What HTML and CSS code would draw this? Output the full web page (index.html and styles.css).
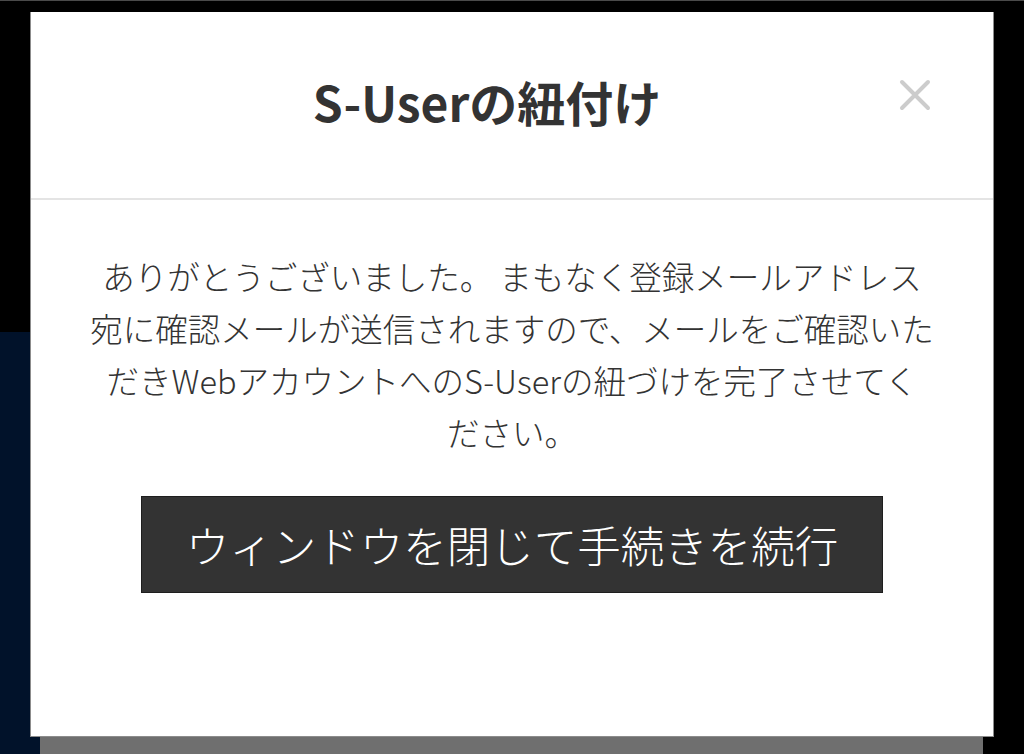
FILE: index.html
```html
<!DOCTYPE html>
<html lang="ja">
<head>
    <meta charset="UTF-8">
    <meta name="viewport" content="width=device-width, initial-scale=1.0">
    <title>S-Userの紐付け</title>
    <link rel="stylesheet" href="styles.css">
</head>
<body>

    <!-- Page behind the dialog -->
    <div class="page">
        <div class="page-top"></div>
        <div class="page-main">
            <div class="page-bar"></div>
        </div>
    </div>

    <!-- Dialog -->
    <div class="modal">
        <div class="modal-header">
            <h2 class="modal-title">S-Userの紐付け</h2>
            <button class="modal-close" aria-label="閉じる">
                <svg width="32" height="32" viewBox="0 0 32 32">
                    <path d="M3 3 L29 29 M29 3 L3 29" stroke="#cccccc" stroke-width="4" stroke-linecap="round" fill="none"/>
                </svg>
            </button>
        </div>

        <div class="modal-body">
            <p class="modal-text">
                ありがとうございました。 まもなく登録メールアドレス<br>
                宛に確認メールが送信されますので、メールをご確認いた<br>
                だきWebアカウントへのS-Userの紐づけを完了させてく<br>
                ださい。
            </p>
            <button class="modal-button">ウィンドウを閉じて手続きを続行</button>
        </div>
    </div>

</body>
</html>
```

FILE: styles.css
```css
body {
    margin: 0;
    padding: 0;
    background-color: #000;
    font-family: "Noto Sans CJK JP", "Noto Sans", sans-serif;
    color: #333;
    height: 754px;
    overflow: hidden;
}

/* Page behind the dialog */
.page {
    border-top: 1px solid #4a4a4a;
}

.page-top {
    height: 331px;
}

.page-main {
    width: 983px;
    height: 422px;
    background-color: #01122a;
    display: flex;
    align-items: flex-end;
}

.page-bar {
    margin-left: 40px;
    flex: 1;
    height: 17px;
    background-color: #6f6f6f;
    border-top: 1px solid #9a9a9a;
}

/* Dialog */
.modal {
    position: fixed;
    top: 12px;
    left: 30px;
    width: 964px;
    height: 725px;
    box-sizing: border-box;
    background-color: #fff;
    border: 1px solid #8c8c8c;
    border-top: none;
}

.modal-header {
    position: relative;
    height: 188px;
    border-bottom: 2px solid #e4e4e4;
    display: flex;
    align-items: center;
    justify-content: center;
    padding: 0 90px 8px 40px;
    box-sizing: border-box;
}

.modal-title {
    margin: 0;
    font-size: 48px;
    font-weight: 700;
    color: #333;
}

.modal-close {
    position: absolute;
    top: 67px;
    right: 62px;
    width: 32px;
    height: 32px;
    padding: 0;
    border: none;
    background: none;
    cursor: pointer;
}

.modal-close svg {
    display: block;
}

.modal-body {
    padding: 50px 40px 0;
    text-align: center;
}

.modal-text {
    margin: 0;
    font-size: 32.5px;
    line-height: 52px;
    font-weight: 300;
    color: #333;
}

.modal-button {
    display: block;
    margin: 38px auto 0;
    width: 742px;
    height: 97px;
    background-color: #333;
    border: 1px solid #1e1e1e;
    color: #fff;
    font-family: "Noto Sans CJK JP", "Noto Sans", sans-serif;
    font-size: 43.5px;
    font-weight: 300;
    cursor: pointer;
}
```
